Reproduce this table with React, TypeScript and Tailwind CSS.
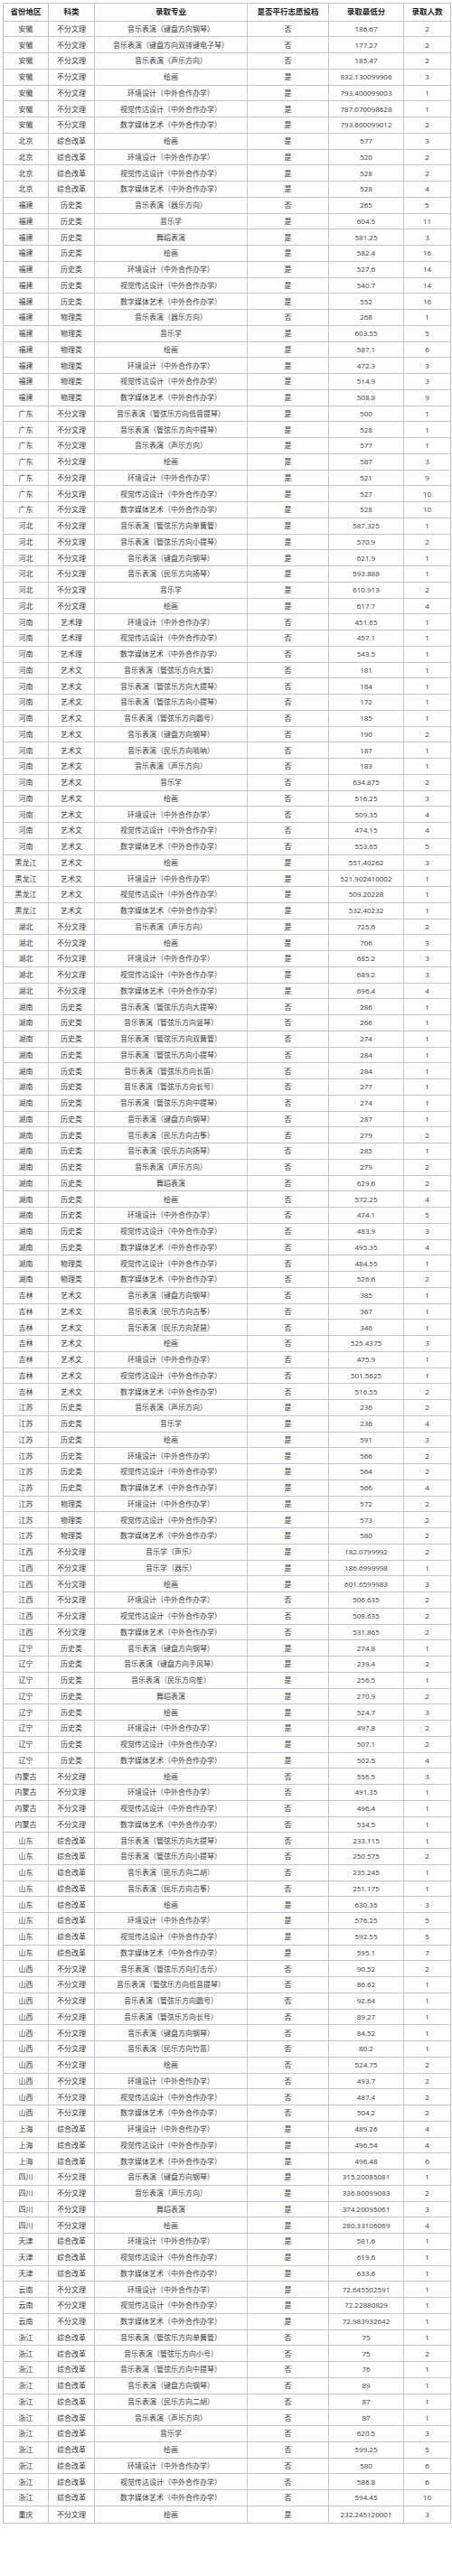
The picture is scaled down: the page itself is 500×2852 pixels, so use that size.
import React from "react"

const HJ = "环境设计（中外合作办学）"
const SJ = "视觉传达设计（中外合作办学）"
const SZ = "数字媒体艺术（中外合作办学）"
const HH = "绘画"

type Row = [string, string, string, string, string, string]

const rows: Row[] = [
  ["安徽", "不分文理", "音乐表演（键盘方向钢琴）", "否", "186.67", "2"],
  ["安徽", "不分文理", "音乐表演（键盘方向双排键电子琴）", "否", "177.27", "2"],
  ["安徽", "不分文理", "音乐表演（声乐方向）", "否", "185.47", "2"],
  ["安徽", "不分文理", HH, "是", "832.130099906", "3"],
  ["安徽", "不分文理", HJ, "是", "793.400099003", "1"],
  ["安徽", "不分文理", SJ, "是", "787.070098628", "1"],
  ["安徽", "不分文理", SZ, "是", "793.600099012", "2"],
  ["北京", "综合改革", HH, "是", "577", "3"],
  ["北京", "综合改革", HJ, "是", "520", "2"],
  ["北京", "综合改革", SJ, "是", "528", "2"],
  ["北京", "综合改革", SZ, "是", "528", "4"],
  ["福建", "历史类", "音乐表演（器乐方向）", "否", "265", "5"],
  ["福建", "历史类", "音乐学", "是", "604.5", "11"],
  ["福建", "历史类", "舞蹈表演", "是", "581.25", "3"],
  ["福建", "历史类", HH, "是", "582.4", "16"],
  ["福建", "历史类", HJ, "是", "527.6", "14"],
  ["福建", "历史类", SJ, "是", "540.7", "14"],
  ["福建", "历史类", SZ, "是", "552", "16"],
  ["福建", "物理类", "音乐表演（器乐方向）", "否", "268", "1"],
  ["福建", "物理类", "音乐学", "是", "603.55", "5"],
  ["福建", "物理类", HH, "是", "587.1", "6"],
  ["福建", "物理类", HJ, "是", "472.3", "3"],
  ["福建", "物理类", SJ, "是", "514.9", "3"],
  ["福建", "物理类", SZ, "是", "508.8", "9"],
  ["广东", "不分文理", "音乐表演（管弦乐方向低音提琴）", "是", "500", "1"],
  ["广东", "不分文理", "音乐表演（管弦乐方向中提琴）", "是", "528", "1"],
  ["广东", "不分文理", "音乐表演（声乐方向）", "是", "577", "1"],
  ["广东", "不分文理", HH, "是", "587", "3"],
  ["广东", "不分文理", HJ, "是", "521", "9"],
  ["广东", "不分文理", SJ, "是", "527", "10"],
  ["广东", "不分文理", SZ, "是", "528", "10"],
  ["河北", "不分文理", "音乐表演（管弦乐方向单簧管）", "是", "587.325", "1"],
  ["河北", "不分文理", "音乐表演（管弦乐方向小提琴）", "是", "570.9", "2"],
  ["河北", "不分文理", "音乐表演（键盘方向钢琴）", "是", "621.9", "1"],
  ["河北", "不分文理", "音乐表演（民乐方向扬琴）", "是", "593.888", "1"],
  ["河北", "不分文理", "音乐学", "是", "610.913", "2"],
  ["河北", "不分文理", HH, "是", "617.7", "4"],
  ["河南", "艺术理", HJ, "否", "451.65", "1"],
  ["河南", "艺术理", SJ, "否", "457.1", "1"],
  ["河南", "艺术理", SZ, "否", "543.5", "1"],
  ["河南", "艺术文", "音乐表演（管弦乐方向大管）", "否", "181", "1"],
  ["河南", "艺术文", "音乐表演（管弦乐方向大提琴）", "否", "184", "1"],
  ["河南", "艺术文", "音乐表演（管弦乐方向小提琴）", "否", "172", "1"],
  ["河南", "艺术文", "音乐表演（管弦乐方向圆号）", "否", "185", "1"],
  ["河南", "艺术文", "音乐表演（键盘方向钢琴）", "否", "190", "2"],
  ["河南", "艺术文", "音乐表演（民乐方向唢呐）", "否", "187", "1"],
  ["河南", "艺术文", "音乐表演（声乐方向）", "否", "183", "1"],
  ["河南", "艺术文", "音乐学", "否", "634.875", "2"],
  ["河南", "艺术文", HH, "否", "516.25", "3"],
  ["河南", "艺术文", HJ, "否", "509.35", "4"],
  ["河南", "艺术文", SJ, "否", "474.15", "4"],
  ["河南", "艺术文", SZ, "否", "553.65", "5"],
  ["黑龙江", "艺术文", HH, "是", "551.40262", "3"],
  ["黑龙江", "艺术文", HJ, "是", "521.902410002", "1"],
  ["黑龙江", "艺术文", SJ, "是", "509.20228", "1"],
  ["黑龙江", "艺术文", SZ, "是", "532.40232", "1"],
  ["湖北", "不分文理", "音乐表演（声乐方向）", "是", "725.6", "2"],
  ["湖北", "不分文理", HH, "是", "706", "3"],
  ["湖北", "不分文理", HJ, "是", "685.2", "3"],
  ["湖北", "不分文理", SJ, "是", "689.2", "3"],
  ["湖北", "不分文理", SZ, "是", "696.4", "4"],
  ["湖南", "历史类", "音乐表演（管弦乐方向大提琴）", "否", "286", "1"],
  ["湖南", "历史类", "音乐表演（管弦乐方向竖琴）", "否", "266", "1"],
  ["湖南", "历史类", "音乐表演（管弦乐方向双簧管）", "否", "274", "1"],
  ["湖南", "历史类", "音乐表演（管弦乐方向小提琴）", "否", "284", "1"],
  ["湖南", "历史类", "音乐表演（管弦乐方向长笛）", "否", "284", "1"],
  ["湖南", "历史类", "音乐表演（管弦乐方向长号）", "否", "277", "1"],
  ["湖南", "历史类", "音乐表演（管弦乐方向中提琴）", "否", "274", "1"],
  ["湖南", "历史类", "音乐表演（键盘方向钢琴）", "否", "287", "1"],
  ["湖南", "历史类", "音乐表演（民乐方向古筝）", "否", "279", "2"],
  ["湖南", "历史类", "音乐表演（民乐方向扬琴）", "否", "285", "1"],
  ["湖南", "历史类", "音乐表演（声乐方向）", "否", "279", "2"],
  ["湖南", "历史类", "舞蹈表演", "否", "629.6", "2"],
  ["湖南", "历史类", HH, "否", "572.25", "4"],
  ["湖南", "历史类", HJ, "否", "474.1", "5"],
  ["湖南", "历史类", SJ, "否", "483.9", "3"],
  ["湖南", "历史类", SZ, "否", "495.35", "4"],
  ["湖南", "物理类", SJ, "否", "484.55", "1"],
  ["湖南", "物理类", SZ, "否", "526.6", "2"],
  ["吉林", "艺术文", "音乐表演（键盘方向钢琴）", "否", "385", "1"],
  ["吉林", "艺术文", "音乐表演（民乐方向古筝）", "否", "367", "1"],
  ["吉林", "艺术文", "音乐表演（民乐方向琵琶）", "否", "346", "1"],
  ["吉林", "艺术文", HH, "否", "525.4375", "3"],
  ["吉林", "艺术文", HJ, "否", "475.9", "1"],
  ["吉林", "艺术文", SJ, "否", "501.5625", "1"],
  ["吉林", "艺术文", SZ, "否", "516.55", "2"],
  ["江苏", "历史类", "音乐表演（声乐方向）", "是", "236", "2"],
  ["江苏", "历史类", "音乐学", "是", "236", "4"],
  ["江苏", "历史类", HH, "是", "591", "3"],
  ["江苏", "历史类", HJ, "是", "566", "2"],
  ["江苏", "历史类", SJ, "是", "564", "2"],
  ["江苏", "历史类", SZ, "是", "566", "4"],
  ["江苏", "物理类", HJ, "是", "572", "2"],
  ["江苏", "物理类", SJ, "是", "573", "2"],
  ["江苏", "物理类", SZ, "是", "580", "2"],
  ["江西", "不分文理", "音乐学（声乐）", "是", "182.0799992", "2"],
  ["江西", "不分文理", "音乐学（器乐）", "是", "186.6999998", "1"],
  ["江西", "不分文理", HH, "是", "601.6599983", "3"],
  ["江西", "不分文理", HJ, "否", "506.635", "2"],
  ["江西", "不分文理", SJ, "否", "508.635", "2"],
  ["江西", "不分文理", SZ, "否", "531.865", "2"],
  ["辽宁", "历史类", "音乐表演（键盘方向钢琴）", "是", "274.8", "1"],
  ["辽宁", "历史类", "音乐表演（键盘方向手风琴）", "是", "239.4", "2"],
  ["辽宁", "历史类", "音乐表演（民乐方向笙）", "是", "256.5", "1"],
  ["辽宁", "历史类", "舞蹈表演", "是", "270.9", "2"],
  ["辽宁", "历史类", HH, "是", "524.7", "3"],
  ["辽宁", "历史类", HJ, "是", "497.8", "2"],
  ["辽宁", "历史类", SJ, "是", "507.1", "2"],
  ["辽宁", "历史类", SZ, "是", "502.5", "4"],
  ["内蒙古", "不分文理", HH, "否", "556.5", "3"],
  ["内蒙古", "不分文理", HJ, "否", "491.35", "1"],
  ["内蒙古", "不分文理", SJ, "否", "496.4", "1"],
  ["内蒙古", "不分文理", SZ, "否", "534.5", "1"],
  ["山东", "综合改革", "音乐表演（管弦乐方向大提琴）", "否", "233.115", "1"],
  ["山东", "综合改革", "音乐表演（管弦乐方向小提琴）", "否", "250.575", "2"],
  ["山东", "综合改革", "音乐表演（民乐方向二胡）", "否", "235.245", "1"],
  ["山东", "综合改革", "音乐表演（民乐方向古筝）", "否", "251.175", "1"],
  ["山东", "综合改革", HH, "是", "630.35", "3"],
  ["山东", "综合改革", HJ, "是", "576.25", "5"],
  ["山东", "综合改革", SJ, "是", "592.55", "5"],
  ["山东", "综合改革", SZ, "是", "595.1", "7"],
  ["山西", "不分文理", "音乐表演（管弦乐方向打击乐）", "否", "90.52", "2"],
  ["山西", "不分文理", "音乐表演（管弦乐方向低音提琴）", "否", "86.62", "1"],
  ["山西", "不分文理", "音乐表演（管弦乐方向圆号）", "否", "92.64", "1"],
  ["山西", "不分文理", "音乐表演（管弦乐方向长号）", "否", "89.27", "1"],
  ["山西", "不分文理", "音乐表演（键盘方向钢琴）", "否", "84.52", "1"],
  ["山西", "不分文理", "音乐表演（民乐方向竹笛）", "否", "80.2", "1"],
  ["山西", "不分文理", HH, "否", "524.75", "2"],
  ["山西", "不分文理", HJ, "否", "493.7", "2"],
  ["山西", "不分文理", SJ, "否", "487.4", "2"],
  ["山西", "不分文理", SZ, "否", "504.2", "2"],
  ["上海", "综合改革", HJ, "是", "489.26", "4"],
  ["上海", "综合改革", SJ, "是", "496.54", "4"],
  ["上海", "综合改革", SZ, "是", "496.48", "6"],
  ["四川", "不分文理", "音乐表演（键盘方向钢琴）", "是", "315.20085081", "1"],
  ["四川", "不分文理", "音乐表演（声乐方向）", "是", "336.80099083", "2"],
  ["四川", "不分文理", "舞蹈表演", "是", "374.20095061", "3"],
  ["四川", "不分文理", HH, "是", "280.33106069", "4"],
  ["天津", "综合改革", HJ, "是", "581.6", "1"],
  ["天津", "综合改革", SJ, "是", "619.6", "1"],
  ["天津", "综合改革", SZ, "是", "633.6", "1"],
  ["云南", "不分文理", HJ, "是", "72.645502591", "1"],
  ["云南", "不分文理", SJ, "是", "72.22880829", "1"],
  ["云南", "不分文理", SZ, "是", "72.983932642", "1"],
  ["浙江", "综合改革", "音乐表演（管弦乐方向单簧管）", "否", "75", "1"],
  ["浙江", "综合改革", "音乐表演（管弦乐方向小号）", "否", "75", "2"],
  ["浙江", "综合改革", "音乐表演（管弦乐方向中提琴）", "否", "76", "1"],
  ["浙江", "综合改革", "音乐表演（键盘方向钢琴）", "否", "89", "1"],
  ["浙江", "综合改革", "音乐表演（民乐方向二胡）", "否", "87", "1"],
  ["浙江", "综合改革", "音乐表演（声乐方向）", "否", "87", "1"],
  ["浙江", "综合改革", "音乐学", "否", "620.5", "3"],
  ["浙江", "综合改革", HH, "否", "599.25", "5"],
  ["浙江", "综合改革", HJ, "否", "580", "6"],
  ["浙江", "综合改革", SJ, "否", "586.8", "6"],
  ["浙江", "综合改革", SZ, "否", "594.45", "10"],
  ["重庆", "不分文理", HH, "是", "232.245120001", "3"],
]

const headers = ["省份地区", "科类", "录取专业", "是否平行志愿投档", "录取最低分", "录取人数"]

// shared column template so header and body line up
const cols = "grid grid-cols-[50px_51px_169px_90px_83px_51px]"

export default function App() {
  return (
    <div
      className="min-h-[2852px] bg-white pl-[3px] pt-[3px]"
      style={{ fontFamily: '"Open Sans", "Noto Sans CJK SC", sans-serif' }}
    >
      <div className="w-[496px] border border-[#bdbdbd] text-center text-[8px] leading-none text-[#3a3a3a]">
        <div className={`${cols} h-[19.5px] border-b border-[#c4c4c4] text-[8.5px] font-bold text-[#222]`}>
          {headers.map((h, j) => (
            <div
              key={h}
              className={`flex items-center justify-center ${j < 5 ? "border-r border-[#c4c4c4]" : ""}`}
            >
              {h}
            </div>
          ))}
        </div>
        {rows.map((r, i) => (
          <div
            key={i}
            className={`${cols} h-[17.75px] ${i < rows.length - 1 ? "border-b border-[#c4c4c4]" : ""}`}
          >
            {r.map((c, j) => (
              <div
                key={j}
                className={`flex items-center justify-center whitespace-nowrap ${j < 5 ? "border-r border-[#c4c4c4]" : ""}`}
              >
                {c}
              </div>
            ))}
          </div>
        ))}
      </div>
    </div>
  )
}
